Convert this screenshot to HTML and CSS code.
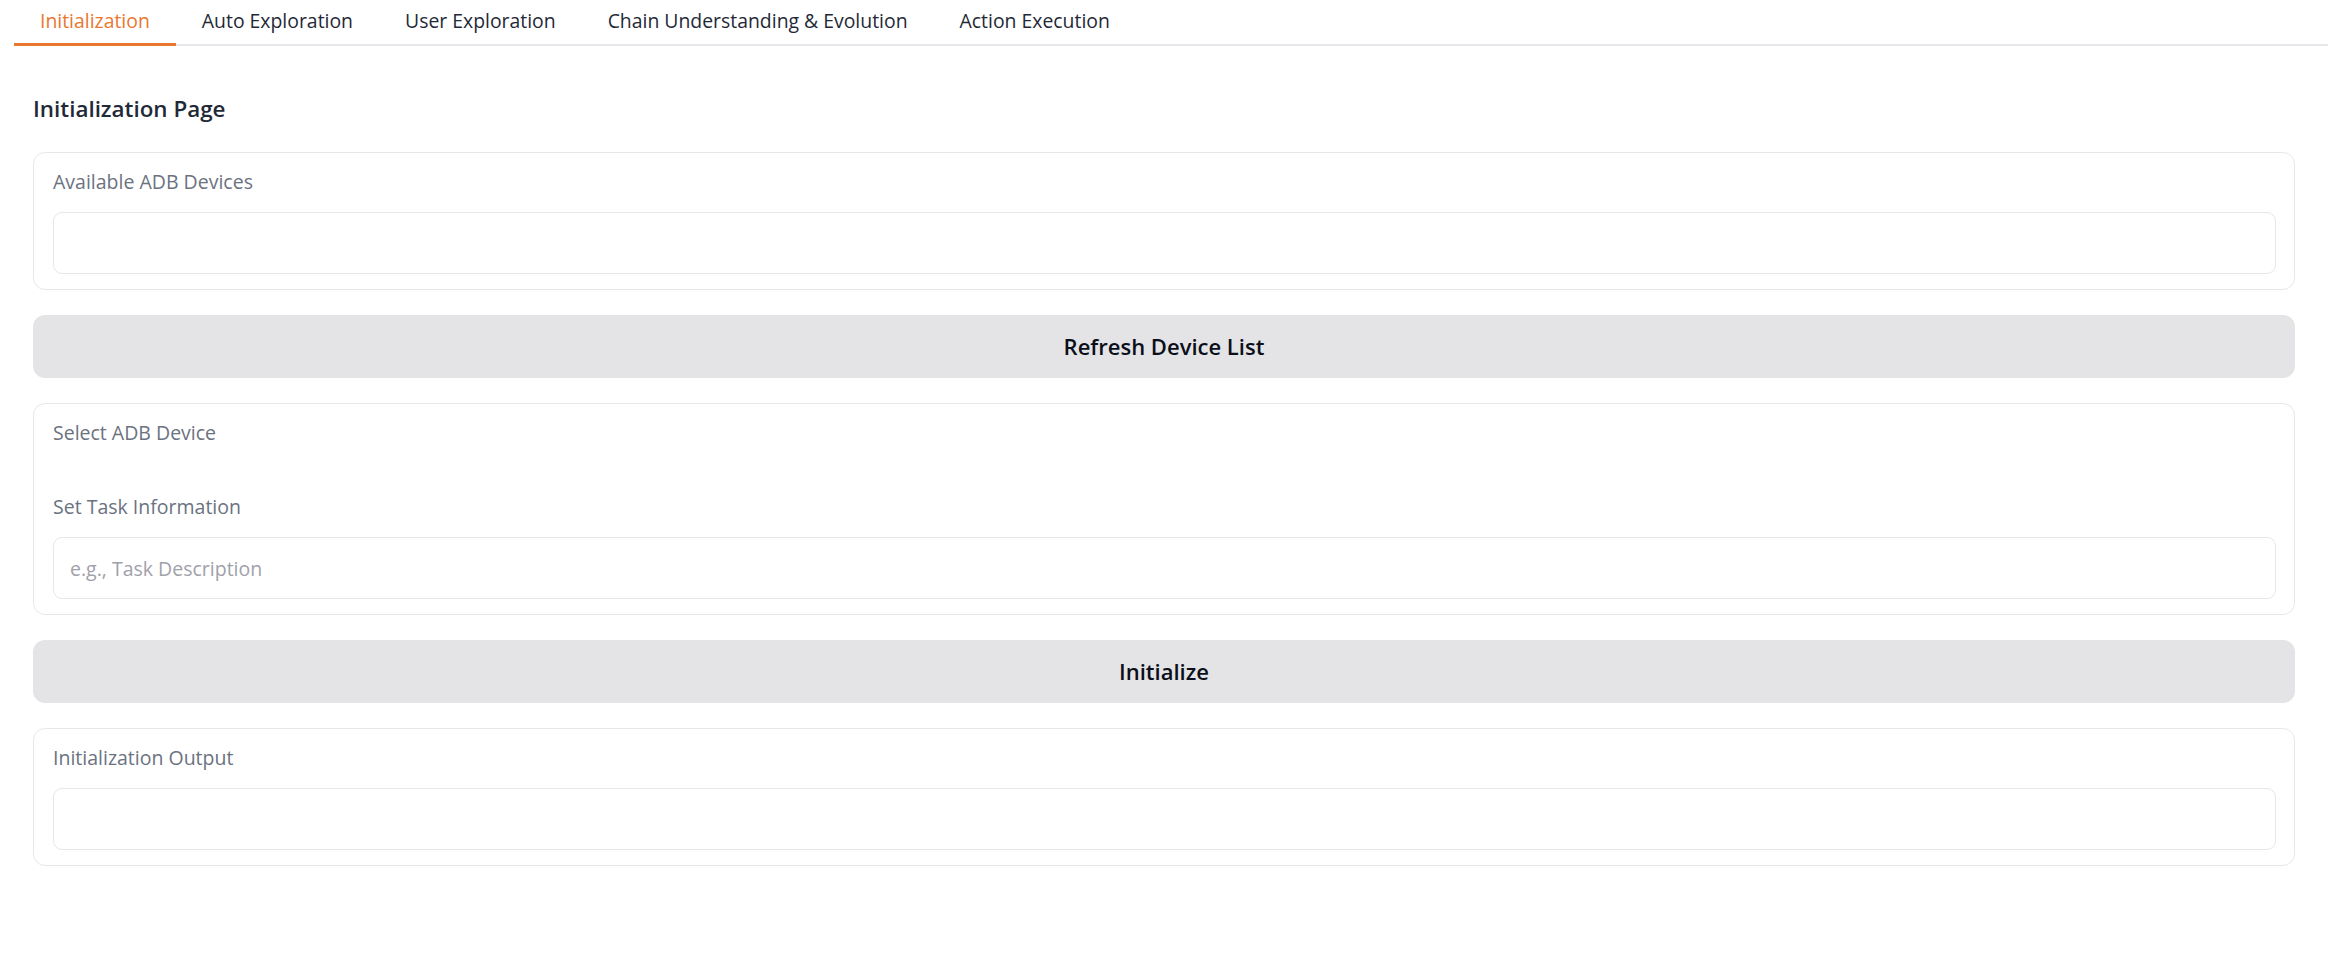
FILE: index.html
```html
<!DOCTYPE html>
<html lang="en">
<head>
<meta charset="utf-8">
<title>Initialization</title>
<link rel="stylesheet" href="styles.css">
</head>
<body>
<div class="app">
  <nav class="tabs">
    <button class="tab tab-selected">Initialization</button>
    <button class="tab">Auto Exploration</button>
    <button class="tab">User Exploration</button>
    <button class="tab">Chain Understanding &amp; Evolution</button>
    <button class="tab">Action Execution</button>
  </nav>
  <main class="panel">
    <h3 class="page-title">Initialization Page</h3>
    <section class="block">
      <label class="block-label">Available ADB Devices</label>
      <div class="field"></div>
    </section>
    <button class="action-btn">Refresh Device List</button>
    <section class="block">
      <label class="block-label">Select ADB Device</label>
      <div class="dropdown-space"></div>
      <label class="block-label">Set Task Information</label>
      <input class="field field-input" type="text" placeholder="e.g., Task Description">
    </section>
    <button class="action-btn">Initialize</button>
    <section class="block">
      <label class="block-label">Initialization Output</label>
      <div class="field"></div>
    </section>
  </main>
</div>
</body>
</html>
```
FILE: styles.css
```css
* {
  box-sizing: border-box;
}

html, body {
  margin: 0;
  padding: 0;
  background: #ffffff;
}

body {
  font-family: "Open Sans", "Noto Sans", "Liberation Sans", sans-serif;
  color: #1f2937;
  font-size: 19.5px;
  line-height: 30px;
}

.app {
  margin: 0 2px 0 14px;
}

.tabs {
  display: flex;
  border-bottom: 2px solid #e5e7eb;
}

.tab {
  font: inherit;
  font-size: 19.4px;
  color: #1f2937;
  background: transparent;
  border: none;
  border-bottom: 3px solid transparent;
  margin: 0 0 -2px 0;
  padding: 6px 26px 7px 26px;
  height: 46px;
  cursor: pointer;
  white-space: nowrap;
}

.tab-selected {
  color: #ea7730;
  border-bottom-color: #ea7730;
}

.panel {
  display: flex;
  flex-direction: column;
  gap: 25px;
  padding: 48px 33px 40px 19px;
}

.page-title {
  margin: 0 0 3px 0;
  font-size: 22.4px;
  line-height: 30px;
  font-weight: 600;
  color: #1f2937;
}

.block {
  display: flex;
  flex-direction: column;
  border: 1px solid #e5e7eb;
  border-radius: 12px;
  padding: 14px 18px 15px 19px;
  background: #ffffff;
}

.block-label {
  display: block;
  color: #6b7280;
  font-size: 19.5px;
  line-height: 30px;
  margin-bottom: 15px;
}

.dropdown-space {
  height: 29px;
}

.field {
  display: block;
  width: 100%;
  height: 62px;
  border: 1px solid #e5e7eb;
  border-radius: 9px;
  background: #ffffff;
}

.field-input {
  font: inherit;
  font-size: 19.5px;
  color: #1f2937;
  padding: 0 16px;
  outline: none;
}

.field-input::placeholder {
  color: #a1a1aa;
}

.action-btn {
  display: block;
  width: 100%;
  height: 63px;
  border: none;
  border-radius: 12px;
  background: #e4e4e7;
  color: #0b0f19;
  font-family: inherit;
  font-size: 22px;
  font-weight: 600;
  line-height: 30px;
  padding: 0 0 2px 0;
  cursor: pointer;
}
```
